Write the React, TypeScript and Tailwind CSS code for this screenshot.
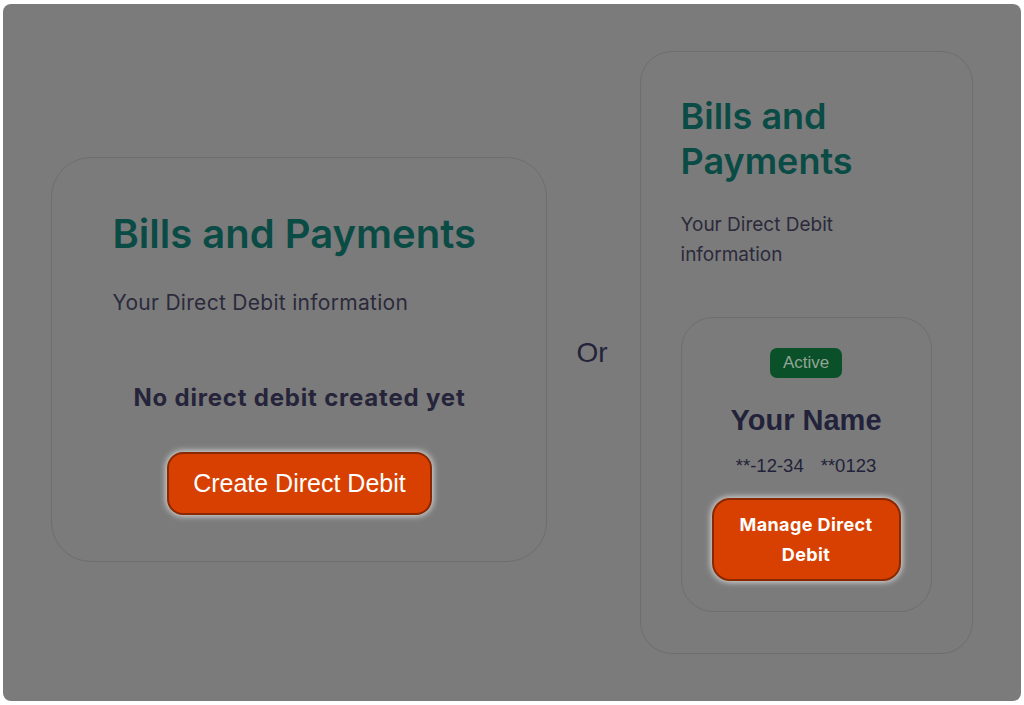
export default function App() {
  return (
    <div className="h-[705px] w-[1024px] bg-white pt-[4px] pb-[4px] px-[3px] font-['Inter',sans-serif]">
      <div className="h-full w-full rounded-[8px] bg-[#7b7b7b] flex items-center justify-center">
        {/* Left card */}
        <div className="mt-[14px] w-[496px] h-[405px] rounded-[40px] border border-[#6e6e6e] pt-[53px] px-[60px] flex flex-col">
          <h2 className="text-[40px] leading-[45px] font-semibold text-[#0b4b45]">
            Bills and Payments
          </h2>
          <p className="mt-[32px] text-[21px] leading-[30px] tracking-[0.3px] text-[#2b2a3b]">
            Your Direct Debit information
          </p>
          <p className="mt-[64px] text-center text-[24px] leading-[32px] tracking-[0.8px] font-bold text-[#25243a]">
            No direct debit created yet
          </p>
          <div className="mt-[38px] flex justify-center">
            <button className="h-[63px] px-[24px] rounded-[16px] border-2 border-[#8a2800] bg-[#d74000] text-white text-[25px] font-['Liberation_Sans',Arial,sans-serif] shadow-[0_0_6px_1px_rgba(255,255,255,0.75)]">
              Create Direct Debit
            </button>
          </div>
        </div>

        {/* Or */}
        <div className="ml-[29px] mr-[32px] text-[28px] text-[#23233a] font-['Liberation_Sans',Arial,sans-serif]">
          Or
        </div>

        {/* Right card */}
        <div className="w-[333px] h-[603px] rounded-[32px] border border-[#6e6e6e] px-[40px] pt-[42px] pb-[40px] flex flex-col">
          <h2 className="text-[36px] leading-[45px] font-semibold text-[#0b4b45]">
            Bills and
            <br />
            Payments
          </h2>
          <p className="mt-[26px] text-[19px] leading-[30px] text-[#2b2a3b]">
            Your Direct Debit
            <br />
            information
          </p>
          <div className="mt-[47px] rounded-[32px] border border-[#6e6e6e] p-[30px] flex flex-col items-center font-['Liberation_Sans',Arial,sans-serif]">
            <span className="h-[30px] px-[13px] rounded-[7px] bg-[#0a5029] text-[#93a595] text-[17px] flex items-center">
              Active
            </span>
            <div className="mt-[24px] text-[29px] leading-[36px] font-bold text-[#22223a]">
              Your Name
            </div>
            <div className="mt-[16px] flex gap-[17px] text-[18.5px] leading-[24px] text-[#22223a]">
              <span>**-12-34</span>
              <span>**0123</span>
            </div>
            <button className="mt-[20px] w-full h-[83px] rounded-[18px] border-2 border-[#8a2800] bg-[#d74000] text-white text-[18px] leading-[30px] tracking-[0.4px] font-bold font-['Inter',sans-serif] shadow-[0_0_6px_1px_rgba(255,255,255,0.75)]">
              Manage Direct
              <br />
              Debit
            </button>
          </div>
        </div>
      </div>
    </div>
  );
}
